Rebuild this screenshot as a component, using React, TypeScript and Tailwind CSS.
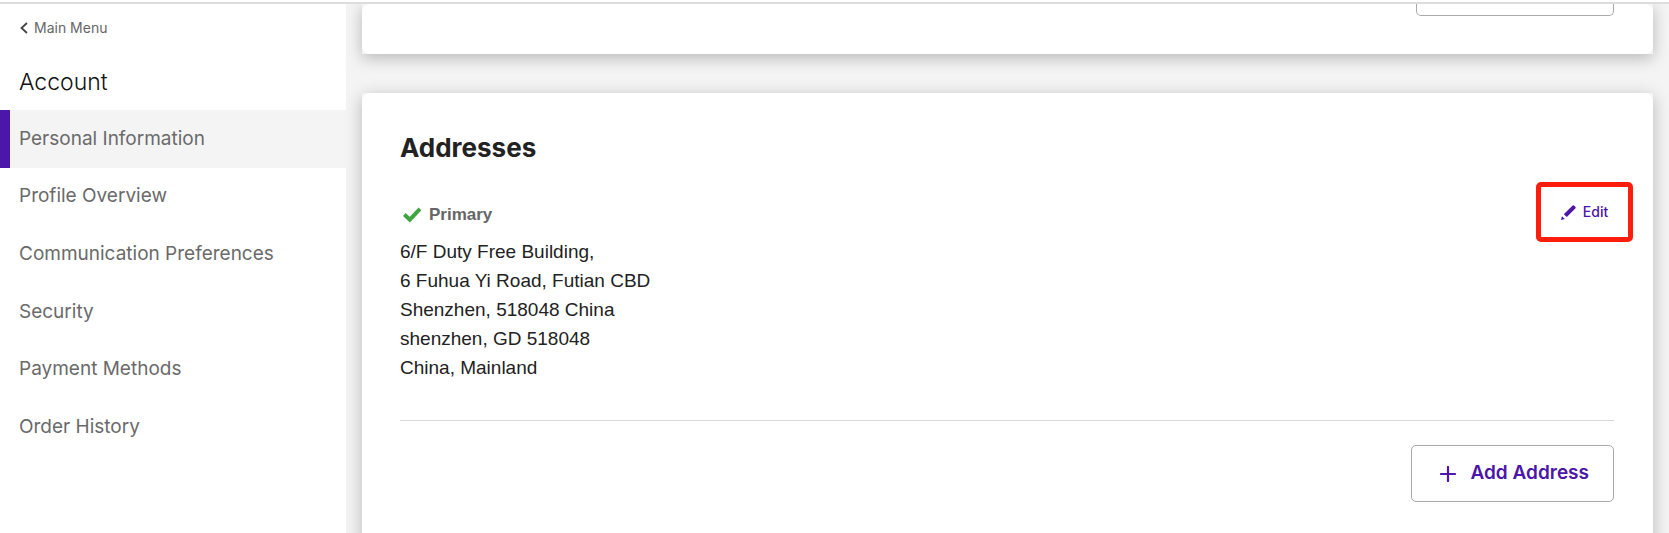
import type { ReactNode } from "react";

const menuItems = [
  "Personal Information",
  "Profile Overview",
  "Communication Preferences",
  "Security",
  "Payment Methods",
  "Order History",
];

const addressLines = [
  "6/F Duty Free Building,",
  "6 Fuhua Yi Road, Futian CBD",
  "Shenzhen, 518048 China",
  "shenzhen, GD 518048",
  "China, Mainland",
];

function Card({ children }: { children: ReactNode }) {
  return (
    <section className="bg-[#f4f4f4] shadow-[0_4px_16px_rgba(0,0,0,0.25)]">
      <div className="rounded-lg bg-white pl-[38px] pr-[39px]">{children}</div>
    </section>
  );
}

function Sidebar() {
  return (
    <aside className="w-[346px] shrink-0 bg-white font-['Inter',sans-serif]">
      <a
        href="#menu"
        className="ml-5 mt-[14px] flex h-5 items-center gap-[6px] text-sm text-[#666]"
      >
        <svg className="h-3 w-2" viewBox="0 0 8 12" fill="none" stroke="#444" strokeWidth="1.8" aria-hidden="true">
          <path d="M7 1 1.5 6 7 11" />
        </svg>
        Main Menu
      </a>
      <h2 className="ml-[19px] mt-7 text-[23px] font-light leading-8 text-[#111]">Account</h2>
      <nav className="mt-3 grid h-[346px] grid-rows-6">
        {menuItems.map((item, i) => (
          <a
            key={item}
            href="#account"
            className={
              i === 0
                ? "flex items-center border-l-10 border-[#4c16a8] bg-[#f4f4f4] pl-[9px] text-[19px] text-[#6a6a6a]"
                : "flex items-center pl-[19px] text-[19px] text-[#6a6a6a]"
            }
          >
            {item}
          </a>
        ))}
      </nav>
    </aside>
  );
}

export default function App() {
  return (
    <div className="flex h-screen flex-col overflow-hidden bg-white">
      <div className="mt-[2px] h-[2px] shrink-0 bg-[#ddd]" />
      <div className="flex min-h-0 flex-1">
        <Sidebar />
        <main className="flex min-w-0 flex-1 flex-col gap-[39px] overflow-hidden bg-[#f4f4f4] pl-4 pr-4">
          <Card>
            <div className="flex h-[50px] justify-end">
              <div className="h-3 w-[198px] rounded-b-[5px] border border-t-0 border-[#aaa]" />
            </div>
          </Card>
          <Card>
            <h1 className="pt-9 font-['Inter',sans-serif] text-[26px] font-bold leading-[38px] text-[#222]">
              Addresses
            </h1>
            <div className="mt-[14px] flex items-start justify-between border-b border-[#d8d8d8] pb-[38px]">
              <div className="pt-[21px] font-['Liberation_Sans',Arial,sans-serif]">
                <div className="flex h-[26px] items-center gap-2 pl-[3px] text-[17px] font-bold text-[#666]">
                  <svg className="h-4 w-[18px]" viewBox="0 0 18 16" fill="none" stroke="#3fa63f" strokeWidth="4" aria-hidden="true">
                    <path d="M1.3 7.5 6.8 12.7 17 2" />
                  </svg>
                  Primary
                </div>
                <address className="mt-[9px] text-[19px] not-italic leading-[29px] text-[#222]">
                  {addressLines.map((line) => (
                    <div key={line}>{line}</div>
                  ))}
                </address>
              </div>
              <button className="-mr-[19px] mt-[1px] flex h-[60px] w-[97px] items-center justify-center gap-[7px] rounded-[5px] border-5 border-[#ff1d0d] font-['Inter',sans-serif] text-sm font-medium text-[#4c16a8]">
                <svg className="h-[15px] w-[15px]" viewBox="0 0 15 15" fill="#4c16a8" aria-hidden="true">
                  <path d="M0 15 1 11.2 3.8 14ZM2.8 9.2 11.4 .7Q12.4 -.2 13.4 .8L14.3 1.7Q15.2 2.6 14.3 3.5L5.8 12.1Z" />
                </svg>
                Edit
              </button>
            </div>
            <div className="flex justify-end pb-12 pt-6">
              <button className="flex h-[57px] items-center gap-[14px] rounded-[5px] border border-[#aaa] pl-7 pr-6 font-['Inter',sans-serif] text-[19px] font-semibold text-[#4c16a8]">
                <svg className="h-4 w-4" viewBox="0 0 16 16" fill="none" stroke="#4c16a8" strokeWidth="2.2" strokeLinecap="round" aria-hidden="true">
                  <path d="M8 1V15M1 8H15" />
                </svg>
                Add Address
              </button>
            </div>
          </Card>
        </main>
      </div>
    </div>
  );
}
